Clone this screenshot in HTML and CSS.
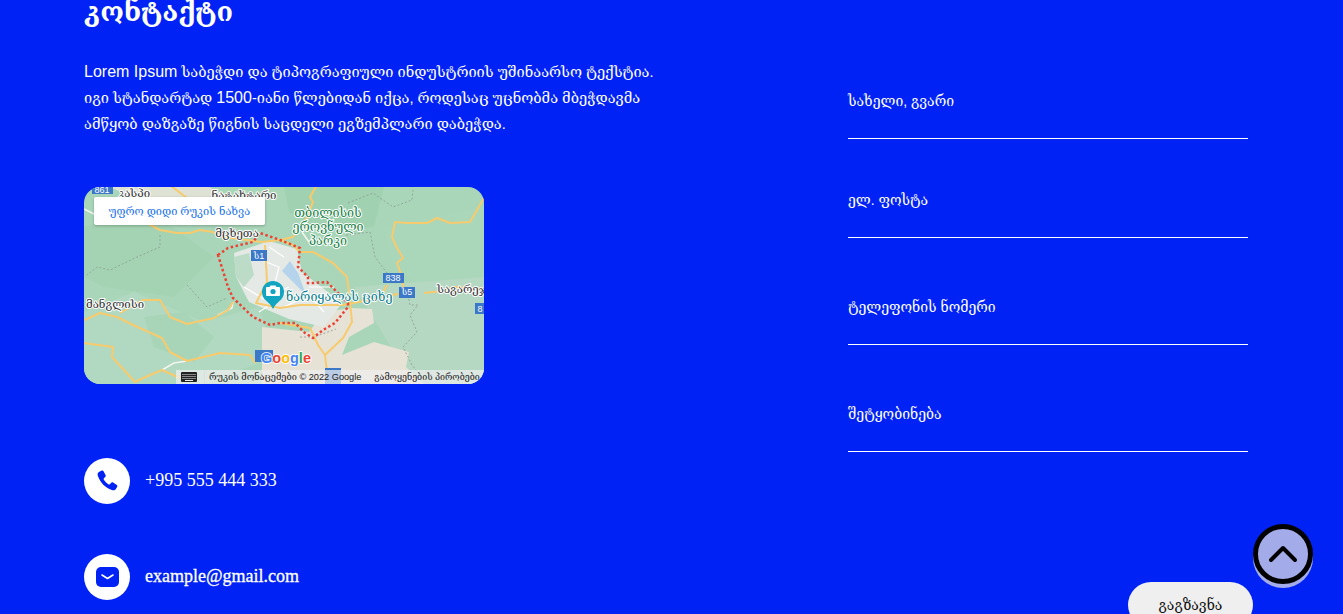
FILE: index.html
```html
<!DOCTYPE html>
<html lang="ka">
<head>
<meta charset="utf-8">
<title>კონტაქტი</title>
<link rel="stylesheet" href="styles.css">
</head>
<body>
<main class="contact">
  <section class="info">
    <h1 class="title">კონტაქტი</h1>
    <p class="lead"><span class="latin">Lorem Ipsum</span> საბეჭდი და ტიპოგრაფიული ინდუსტრიის უშინაარსო ტექსტია. იგი სტანდარტად <span class="latin">1500</span>-იანი წლებიდან იქცა, როდესაც უცნობმა მბეჭდავმა ამწყობ დაზგაზე წიგნის საცდელი ეგზემპლარი დაბეჭდა.</p>
    <div class="map">
      <svg class="map-art" viewBox="0 0 400 197" width="400" height="197" aria-hidden="true">
        <rect width="400" height="197" fill="#a9d6b9"/>
        <path d="M0 40 60 20 130 70 90 110 20 100 0 90Z" fill="#a3d3b3"/>
        <path d="M0 125 50 105 120 135 175 120 190 170 120 197 0 197Z" fill="#b1d9c1"/>
        <path d="M60 130 100 125 130 150 110 175 70 160Z" fill="#a8d5b8"/>
        <path d="M200 0 300 0 290 40 240 45 205 25Z" fill="#a0d1b0"/>
        <path d="M300 40 400 20 400 90 340 100 310 80Z" fill="#aad6ba"/>
        <path d="M270 100 400 90 400 197 330 197Z" fill="#b4d8c1"/>
        <path d="M25 0 125 0 150 12 95 20 60 14Z" fill="#dde2d4"/>
        <path d="M178 197 178 140 225 145 240 125 268 121 288 122 290 136 265 150 258 168 290 155 325 165 322 180 340 197Z" fill="#e6e2d5"/>
        <path d="M150 66 185 54 213 62 218 85 258 116 240 140 205 132 165 115 152 90Z" fill="#e4e9e6"/>
        <path d="M150 70 165 66 170 88 160 100 152 90Z" fill="#bcdcc8"/>
        <path d="M198 84 222 108 214 86 206 74Z" fill="#b5d3ea"/>
        <path class="street" d="M170 70 195 80 190 100 210 112M160 100 180 112 205 100M185 60 200 70M200 120 225 108 240 125M175 125 195 112M225 100 250 100"/>
        <g class="trail">
          <path d="M264 16 289 6 309 20 328 13 329 3"/>
          <path d="M262 48 286 45 291 70 303 86"/>
          <path d="M324 108 326 118 334 118 326 128 333 145 319 160 328 178 336 188"/>
          <path d="M76 48 76 60 53 70 26 83 13 80 3 88"/>
          <path d="M103 98 123 120 143 111"/>
          <path d="M216 150 230 150 252 142"/>
        </g>
        <path class="minor" d="M78 183 90 176 103 174M134 128 148 121 149 115M0 22 12 28M225 55 218 45"/>
        <g class="road">
          <path d="M86 -2 99 8 112 18"/>
          <path d="M63 36 76 43 93 46 106 46 116 43 129 45 139 50 178 55 196 53"/>
          <path d="M233 -2 226 10 229 15 222 32 209 50 196 53"/>
          <path d="M311 35 323 36 343 36 353 31 366 36 386 35 400 11"/>
          <path d="M311 35 308 50 313 61 319 71 313 76 318 90 320 104"/>
          <path d="M196 53 209 58 216 65 229 65 249 76 263 90 266 115 268 135 259 151 241 168 243 185"/>
          <path d="M181 58 183 95 172 116 196 121 216 118 259 118 296 111 318 106"/>
          <path d="M303 98 296 111"/>
          <path d="M196 136 226 141 234 158 241 168"/>
          <path d="M0 133 16 126 33 130 49 138 78 151 86 165 103 174 136 166 166 168 171 176"/>
          <path d="M36 126 59 113 76 113 86 130 103 137 130 131 144 123 149 115"/>
          <path d="M0 156 29 160 28 170 51 195 66 188 78 183 96 191"/>
          <path d="M340 106 358 104 372 100 400 102"/>
        </g>
        <path class="border" d="M134 68 144 61 156 58 169 55 176 46 196 53 216 61 214 80 224 90 224 96 229 96 243 95 264 116 264 120 251 136 239 143 229 151 221 146 211 136 196 136 186 138 169 130 149 111 144 100Z"/>
        <g class="shields">
          <rect x="8" y="-3" width="21" height="10"/>
          <rect x="167" y="63" width="16" height="11"/>
          <rect x="299" y="86" width="21" height="10"/>
          <rect x="315" y="100" width="16" height="11"/>
          <rect x="391" y="116" width="10" height="11"/>
          <rect x="171" y="163" width="18" height="12"/>
          <rect x="241" y="181" width="16" height="16"/>
        </g>
        <g class="shield-text">
          <text x="18" y="6">861</text>
          <text x="175" y="72">ს1</text>
          <text x="309" y="94">838</text>
          <text x="323" y="108">ს5</text>
          <text x="396" y="125">8</text>
        </g>
        <g class="place dark">
          <text x="50" y="10">კასპი</text>
          <text x="160" y="12">ნატახტარი</text>
          <text x="153" y="50">მცხეთა</text>
          <text x="31" y="121">მანგლისი</text>
        </g>
        <text class="place far" x="353" y="106">საგარეჯო</text>
        <g class="place park">
          <text x="244" y="30">თბილისის</text>
          <text x="244" y="44">ეროვნული</text>
          <text x="244" y="58">პარკი</text>
        </g>
        <text class="place poi" x="202" y="114">ნარიყალას ციხე</text>
        <path class="pin" d="M189 122c-1.600-4-4.400-6-6.700-8.300a11 11 0 1 1 13.400 0c-2.300 2.300-5.100 4.300-6.700 8.300Z"/>
        <path class="pin-glyph" d="M183 100h2.500l1-1.500h5l1 1.500h2.500a1 1 0 0 1 1 1v7a1 1 0 0 1-1 1h-12a1 1 0 0 1-1-1v-7a1 1 0 0 1 1-1Z"/>
        <circle cx="189" cy="104.500" r="2.600" fill="#12a5c2"/>
        <text class="logo" x="177" y="176"><tspan fill="#4285f4">G</tspan><tspan fill="#ea4335">o</tspan><tspan fill="#fbbc04">o</tspan><tspan fill="#4285f4">g</tspan><tspan fill="#34a853">l</tspan><tspan fill="#ea4335">e</tspan></text>
      </svg>
      <a class="map-link" href="#">უფრო დიდი რუკის ნახვა</a>
      <div class="attribution">
        <svg class="keys" viewBox="0 0 16 10" width="16" height="10" aria-hidden="true">
          <path fill="#222" d="M1 0h14a1 1 0 0 1 1 1v8a1 1 0 0 1-1 1H1a1 1 0 0 1-1-1V1a1 1 0 0 1 1-1Z"/>
          <path stroke="#eee" stroke-width="1" stroke-dasharray="1 1" d="M1.500 2.500h13M1.500 4.500h13M1.500 6.500h13"/>
          <path stroke="#eee" stroke-width="1" d="M4 8.500h8"/>
        </svg>
        <span class="attr-item attr-data">რუკის მონაცემები © 2022 Google</span>
        <span class="attr-item attr-terms">გამოყენების პირობები</span>
      </div>
    </div>
    <div class="reach reach-phone">
      <span class="reach-icon">
        <svg viewBox="0 0 24 24" width="24" height="24" aria-hidden="true"><path fill="#0022f5" d="M6.700 1.600 3.900 3.100C2.600 3.900 2.300 5.400 2.900 7.100c2.600 7 7.100 11.600 14 14 1.700.6 3.200.2 4-1.100l1.300-2.300c.3-.6.100-1.300-.4-1.700l-3.700-2.500c-.6-.4-1.300-.3-1.800.2l-1.500 1.500c-.4.400-1 .4-1.500.1-1.800-1.200-3.300-2.800-4.500-4.600-.3-.5-.2-1 .1-1.400l1.500-1.600c.4-.5.500-1.200.1-1.700L8.400 2c-.4-.6-1.100-.7-1.700-.4Z"/></svg>
      </span>
      <span class="reach-text">+995 555 444 333</span>
    </div>
    <div class="reach reach-mail">
      <span class="reach-icon">
        <svg viewBox="0 0 23 20" width="23" height="20" aria-hidden="true"><rect width="23" height="20" rx="5" fill="#0022f5"/><path d="M6 8 11.500 11.500 17 8" fill="none" stroke="#fff" stroke-width="1.600" stroke-linecap="round" stroke-linejoin="round"/></svg>
      </span>
      <span class="reach-text reach-email">example@gmail.com</span>
    </div>
  </section>
  <form class="form">
    <label class="field field-first">სახელი, გვარი</label>
    <label class="field field-second">ელ. ფოსტა</label>
    <label class="field">ტელეფონის ნომერი</label>
    <label class="field">შეტყობინება</label>
    <button class="send" type="button">გაგზავნა</button>
  </form>
</main>
<button class="to-top" type="button" aria-label="up">
  <svg viewBox="0 0 30 20" width="30" height="20" aria-hidden="true"><path d="M3 16 15 4 27 16" fill="none" stroke="#000" stroke-width="4" stroke-linecap="round" stroke-linejoin="round"/></svg>
</button>
</body>
</html>
```

FILE: styles.css
```css
* { box-sizing: border-box; }
html, body { margin: 0; height: 614px; overflow: hidden; }
body { background: #0022f5; color: #fff; font-family: "Liberation Sans", "DejaVu Serif", serif; }
.contact { display: flex; justify-content: space-between; padding: 0 95px 0 84px; }
.info { width: 580px; }
.title { margin: -8px 0 0; font-size: 27px; line-height: 40px; font-weight: 700; }
.lead { margin: 27px 0 0; font-size: 14.600px; line-height: 26px; }
.latin { font-size: 16px; }
.map { position: relative; width: 400px; height: 197px; margin-top: 50px; border-radius: 16px; overflow: hidden; }
.map-art { display: block; }
.trail path { fill: none; stroke: #8f9a92; stroke-width: .8; stroke-dasharray: 2 2; }
.minor { fill: none; stroke: #f2f5f2; stroke-width: 1.500; }
.street { fill: none; stroke: #fff; stroke-width: 1.200; }
.road path { fill: none; stroke: #f7cb6d; stroke-width: 2; stroke-linejoin: round; }
.border { fill: none; stroke: #ea4335; stroke-width: 2.500; stroke-dasharray: 2.500 2.500; }
.shields rect { fill: #3c78c8; }
.shield-text text { fill: #fff; font-size: 9px; text-anchor: middle; }
.place text, .place { font-size: 11.400px; paint-order: stroke; stroke: #fff; stroke-width: 2px; stroke-linejoin: round; }
.dark text { fill: #333; text-anchor: middle; }
.far { fill: #333; }
.park text { fill: #1a7f49; text-anchor: middle; font-size: 12.500px; }
.poi { fill: #0a7d8d; font-size: 12.500px; }
.pin { fill: #12a5c2; }
.pin-glyph { fill: #fff; }
.logo { font-size: 14.500px; font-weight: 700; paint-order: stroke; stroke: #fff; stroke-width: 1.500px; }
.map-link { position: absolute; left: 10px; top: 10px; width: 171px; height: 28px; display: flex; align-items: center; justify-content: center; background: #fff; border-radius: 2px; color: #1a73e8; font-size: 11px; text-decoration: none; box-shadow: 0 1px 3px rgba(0,0,0,.25); }
.attribution { position: absolute; right: 0; bottom: 0; width: 308px; height: 14px; display: flex; align-items: center; color: #222; font-size: 9.200px; white-space: nowrap; background: rgba(240,240,240,.7); }
.keys { margin-left: 5px; flex: none; }
.attr-item { height: 14px; line-height: 14px; }
.attr-data { margin-left: 7px; padding: 0 5px 0 4px; border-left: 1px solid #ddd; }
.attr-terms { flex: 1; padding-left: 8px; font-size: 8.900px; }
.reach { display: flex; align-items: center; gap: 15px; }
.reach-phone { margin-top: 74px; }
.reach-mail { margin-top: 50px; }
.reach-icon { width: 46px; height: 46px; border-radius: 50%; background: #fff; display: flex; align-items: center; justify-content: center; flex: none; }
.reach-text { font-family: "Liberation Serif", serif; font-size: 18px; padding-bottom: 2px; }
.reach-email { -webkit-text-stroke: .3px #fff; }
.form { width: 400px; position: relative; display: flex; flex-direction: column; padding-top: 91px; }
.field { display: block; height: 48px; font-size: 14px; line-height: 20px; border-bottom: 1px solid #fff; margin-bottom: 59px; }
.field-first { margin-bottom: 51px; }
.send { align-self: flex-end; margin: 71px -5px 0 0; width: 125px; height: 46px; background: #efefef; border: 0; border-radius: 23px; color: #111; font: 14px "Liberation Sans", "DejaVu Serif", serif; }
.to-top { position: fixed; left: 1253px; top: 524px; width: 60px; height: 60px; padding: 0; border: 5px solid #000; border-radius: 50%; background: #a3ace8; box-shadow: 0 4px 0 #a3ace8; display: flex; align-items: center; justify-content: center; }
```
